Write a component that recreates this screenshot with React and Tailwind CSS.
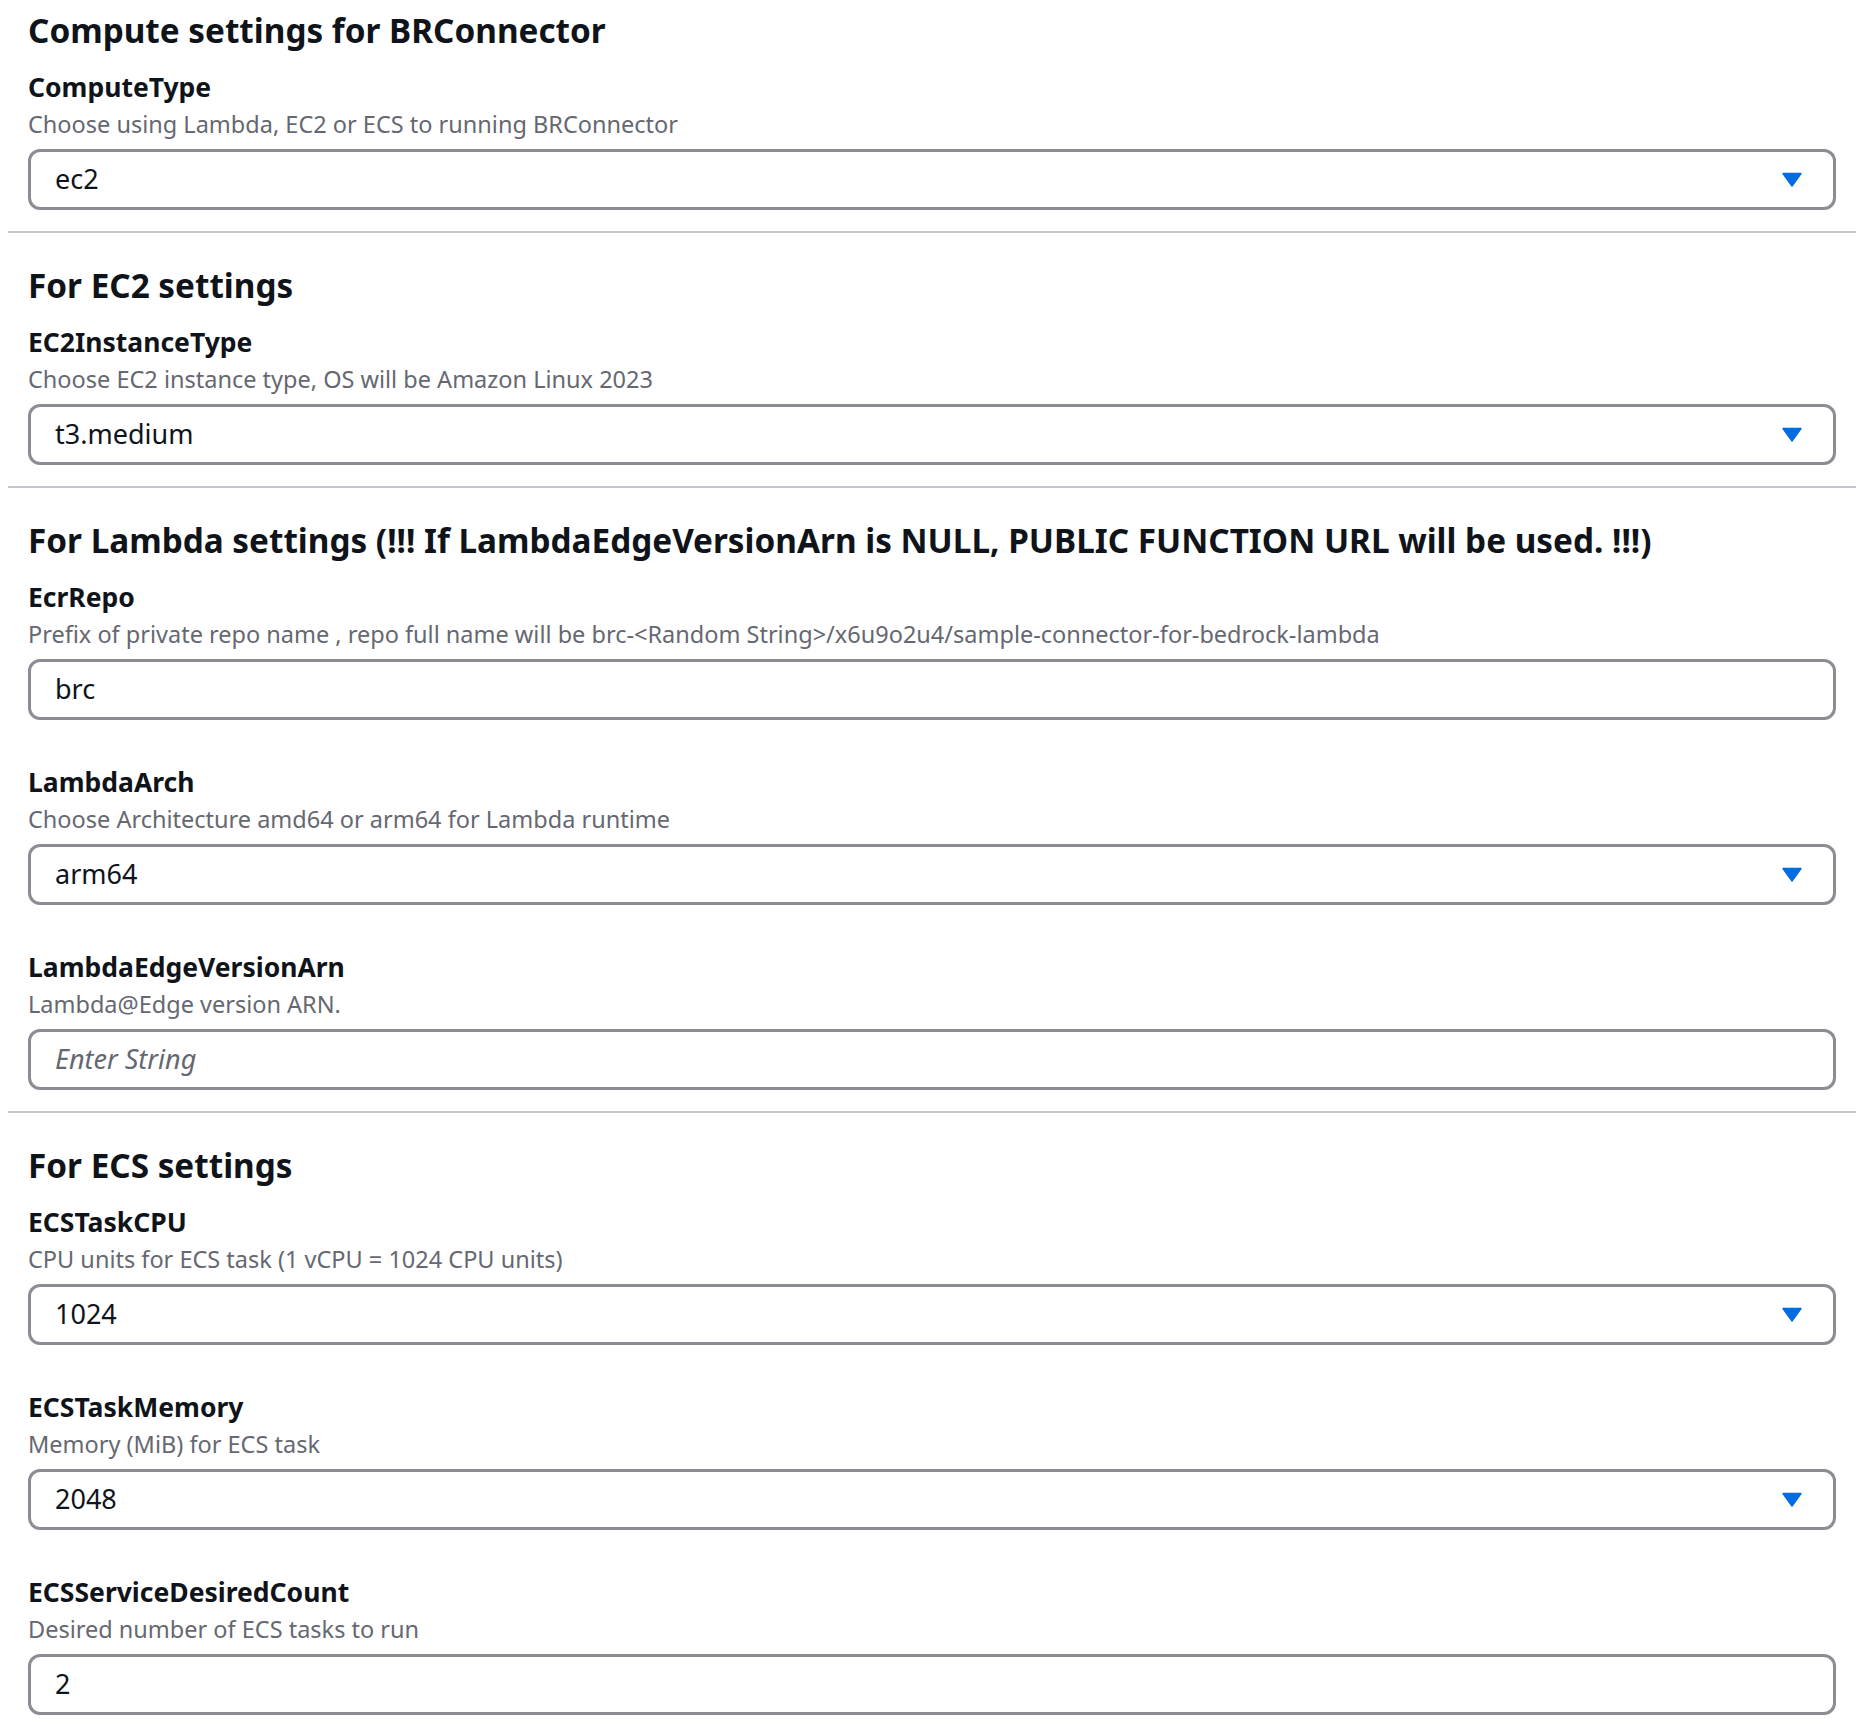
import React from "react";

const sections = [
  {
    title: "Compute settings for BRConnector",
    fields: [
      { label: "ComputeType", desc: "Choose using Lambda, EC2 or ECS to running BRConnector", value: "ec2", select: true },
    ],
  },
  {
    title: "For EC2 settings",
    fields: [
      { label: "EC2InstanceType", desc: "Choose EC2 instance type, OS will be Amazon Linux 2023", value: "t3.medium", select: true },
    ],
  },
  {
    title: "For Lambda settings (!!! If LambdaEdgeVersionArn is NULL, PUBLIC FUNCTION URL will be used. !!!)",
    fields: [
      {
        label: "EcrRepo",
        desc: "Prefix of private repo name , repo full name will be brc-<Random String>/x6u9o2u4/sample-connector-for-bedrock-lambda",
        value: "brc",
      },
      { label: "LambdaArch", desc: "Choose Architecture amd64 or arm64 for Lambda runtime", value: "arm64", select: true },
      { label: "LambdaEdgeVersionArn", desc: "Lambda@Edge version ARN.", placeholder: "Enter String" },
    ],
  },
  {
    title: "For ECS settings",
    fields: [
      { label: "ECSTaskCPU", desc: "CPU units for ECS task (1 vCPU = 1024 CPU units)", value: "1024", select: true },
      { label: "ECSTaskMemory", desc: "Memory (MiB) for ECS task", value: "2048", select: true },
      { label: "ECSServiceDesiredCount", desc: "Desired number of ECS tasks to run", value: "2" },
    ],
  },
];

const Caret = () => (
  <svg width="20" height="15" viewBox="0 0 20 15" className="shrink-0">
    <path d="M1 1.5 L19 1.5 L10 14 Z" fill="#006ce0" stroke="#006ce0" strokeWidth="1.5" strokeLinejoin="round" />
  </svg>
);

const Field = ({ field }) => (
  <div className="flex flex-col">
    <div className="text-[26.5px] leading-[32px] font-bold text-[#0f141a]">{field.label}</div>
    <div className="mt-[6px] text-[23.5px] leading-[30px] text-[#656871]">{field.desc}</div>
    <div className="mt-[10px] h-[61px] flex items-center justify-between rounded-[12px] border-[3px] border-[#8c8c94] bg-white pl-[24px] pr-[31px]">
      {field.placeholder ? (
        <span className="text-[27px] italic text-[#656871]">{field.placeholder}</span>
      ) : (
        <span className="text-[27px] text-[#0f141a]">{field.value}</span>
      )}
      {field.select && <Caret />}
    </div>
  </div>
);

export default function App() {
  return (
    <div className="min-h-[1728px] bg-white px-2 pt-[10px] pb-[13px]" style={{ fontFamily: '"Noto Sans", "Open Sans", sans-serif' }}>
      {sections.map((s, i) => (
        <div key={s.title}>
          {i > 0 && <div className="h-[2px] bg-[#c6c6cd] mt-[21px] mb-[32px]" />}
          <div className="px-5">
            <h2 className="text-[33.3px] leading-[40px] font-bold text-[#0f141a]">{s.title}</h2>
            <div className="mt-[21px] flex flex-col gap-[46px]">
              {s.fields.map((f) => (
                <Field key={f.label} field={f} />
              ))}
            </div>
          </div>
        </div>
      ))}
    </div>
  );
}
